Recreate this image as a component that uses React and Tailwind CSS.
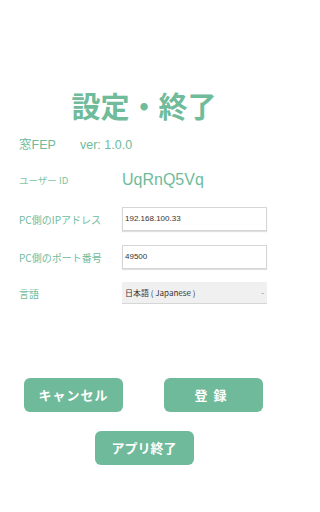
export default function App() {
  const green = 'text-[#6fbb9a]';
  return (
    <div className="w-[288px] h-[512px] bg-white flex flex-col font-['Noto_Sans_CJK_JP',sans-serif]">
      <h1 className={`mt-[86px] h-[38px] leading-[38px] text-center text-[29px] font-bold ${green}`}>設定・終了</h1>

      <div className={`mt-[11px] h-[20px] flex items-center pl-[19px] text-[12.5px] ${green} font-['Liberation_Sans','Noto_Sans_CJK_JP',sans-serif]`}>
        <span className="w-[61px]">窓FEP</span>
        <span>ver: 1.0.0</span>
      </div>

      <div className="mt-[13px] h-[24px] flex items-center pl-[19px]">
        <span className="w-[103px] text-[9.5px] text-[#7cc3a4]">ユーザー ID</span>
        <span className={`text-[16px] ${green} font-['Liberation_Sans',sans-serif]`}>UqRnQ5Vq</span>
      </div>

      <div className="mt-[15px] h-[24px] flex items-center pl-[19px]">
        <span className={`w-[103px] text-[10px] ${green}`}>PC側のIPアドレス</span>
        <div className="w-[145px] h-[24px] border border-[#d6d6d6] shadow-[0_1px_1px_rgba(0,0,0,0.12)] flex items-center px-[2px] text-[8px] text-[#333] font-['Liberation_Sans',sans-serif]">192.168.100.33</div>
      </div>

      <div className="mt-[14px] h-[24px] flex items-center pl-[19px]">
        <span className={`w-[103px] text-[10px] ${green}`}>PC側のポート番号</span>
        <div className="w-[145px] h-[24px] border border-[#d6d6d6] shadow-[0_1px_1px_rgba(0,0,0,0.12)] flex items-center px-[2px] text-[8px] text-[#333] font-['Liberation_Sans',sans-serif]">49500</div>
      </div>

      <div className="mt-[13px] h-[22px] flex items-center pl-[19px]">
        <span className={`w-[103px] text-[10px] ${green}`}>言語</span>
        <div className="w-[145px] h-[22px] bg-[#f0f0f0] border-b border-[#d6d6d6] flex items-center justify-between px-[3px] text-[8px] text-[#333]">
          <span>日本語 ( Japanese )</span>
          <span className="text-[7px] text-[#666]">-</span>
        </div>
      </div>

      <div className="mt-[74px] flex justify-between pl-[24px] pr-[25px]">
        <button className="w-[99px] h-[34px] rounded-[6px] bg-[#6fba9a] text-white text-[13px] font-bold tracking-[1px]">キャンセル</button>
        <button className="w-[99px] h-[34px] rounded-[6px] bg-[#6fba9a] text-white text-[13px] font-bold tracking-[6px]">登録</button>
      </div>

      <div className="mt-[19px] flex justify-center">
        <button className="w-[99px] h-[34px] rounded-[6px] bg-[#6fba9a] text-white text-[13px] font-bold">アプリ終了</button>
      </div>
    </div>
  );
}
